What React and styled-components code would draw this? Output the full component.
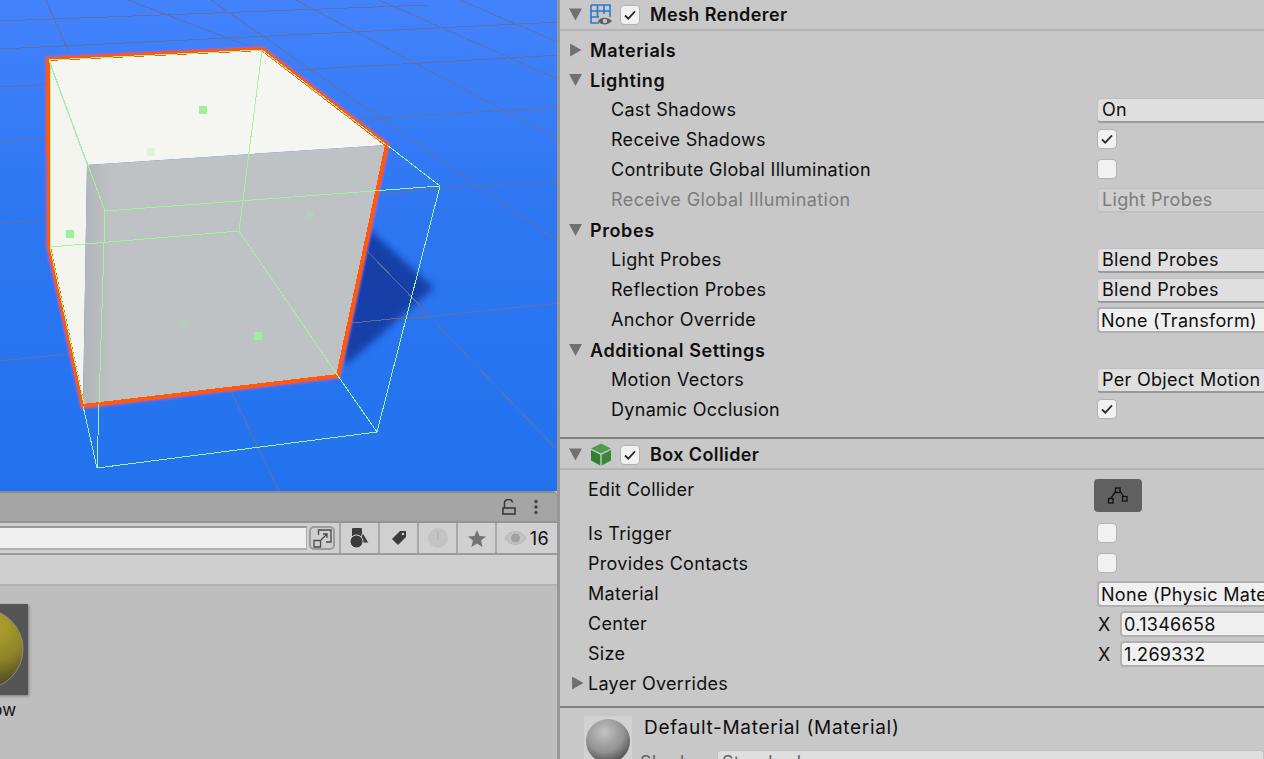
import React from "react";
import styled, { createGlobalStyle } from "styled-components";

const Global = createGlobalStyle`
  html, body { margin: 0; padding: 0; height: 100%; overflow: hidden; background: #c8c8c8; }
  #root { height: 100%; }
  * { box-sizing: border-box; }
`;

const Page = styled.div`
  width: 1264px;
  height: 759px;
  display: flex;
  overflow: hidden;
  font-family: Inter, "Liberation Sans", sans-serif;
  font-size: 18px;
  color: #0f0f0f;
`;

const LeftCol = styled.div`
  width: 557px;
  flex: none;
  display: flex;
  flex-direction: column;
  background: #bebebe;
  overflow: hidden;
`;
const Splitter = styled.div`
  width: 3px;
  flex: none;
  background: #989898;
`;
const SceneBox = styled.div`
  height: 491px;
  flex: none;
  svg { display: block; }
`;
const LockBar = styled.div`
  height: 32px;
  flex: none;
  background: #a5a5a5;
  border-top: 2px solid #8a8a8a;
  border-bottom: 2px solid #949494;
  border-top-right-radius: 5px;
  display: flex;
  align-items: center;
  justify-content: flex-end;
  gap: 17px;
  padding-right: 18px;
`;
const SearchBar = styled.div`
  height: 32px;
  flex: none;
  background: #d0d0d0;
  border-bottom: 2px solid #9a9a9a;
  display: flex;
  align-items: stretch;
`;
const SearchField = styled.div`
  width: 336px;
  flex: none;
  padding: 3px 1px 3px 0;
  display: flex;
  gap: 2px;
`;
const SearchInput = styled.div`
  flex: 1;
  background: #efefef;
  border-top: 2px solid #999;
  border-bottom: 2px solid #aeaeae;
  border-right: 1px solid #aeaeae;
`;
const SearchMode = styled.div`
  width: 26px;
  flex: none;
  border: 2px solid #9c9c9c;
  border-radius: 5px;
  display: flex;
  align-items: center;
  justify-content: center;
  background: #cfcfcf;
`;
const ToolBtn = styled.div`
  width: ${(p) => p.$w || 37}px;
  flex: none;
  margin-left: ${(p) => p.$gap ?? 2}px;
  display: flex;
  align-items: center;
  justify-content: center;
  gap: 4px;
  letter-spacing: 0.5px;
  box-shadow: -2px 0 0 #a8a8a8;
`;
const Breadcrumb = styled.div`
  height: 31px;
  flex: none;
  background: #cfcfcf;
  border-bottom: 2px solid #b2b2b2;
`;
const AssetArea = styled.div`
  flex: 1;
  padding-top: 18px;
`;
const Asset = styled.div`
  width: 92px;
  margin-left: -64px;
  text-align: center;
`;
const AssetThumb = styled.div`
  height: 91px;
  background: #555;
  box-shadow: 1px 1px 3px rgba(0, 0, 0, 0.35);
  overflow: hidden;
  svg { display: block; }
`;
const AssetName = styled.div`
  font-size: 17px;
  line-height: 20px;
  margin-top: 5px;
  margin-left: 16px;
  color: #111;
`;

const Inspector = styled.div`
  flex: 1;
  min-width: 0;
  background: #c8c8c8;
  overflow: hidden;
`;
const CompHeader = styled.div`
  height: 31px;
  padding-top: ${(p) => p.$shift || 0}px;
  display: flex;
  align-items: center;
  padding-left: 9px;
  border-bottom: 2px solid #b4b4b4;
  font-weight: 600;
  letter-spacing: 0.4px;
`;
const Section = styled.div`
  padding-bottom: ${(p) => p.$bottom || 0}px;
  border-bottom: 2px solid #7f7f7f;
`;
const Arrow = styled.span`
  width: 13px;
  height: 13px;
  flex: none;
  background: #707070;
  clip-path: ${(p) =>
    p.$open ? "polygon(0 4%, 100% 4%, 50% 96%)" : "polygon(8% 0, 96% 50%, 8% 100%)"};
`;
const HeaderIcon = styled.span`
  width: 22px;
  height: 22px;
  margin-left: 8px;
  flex: none;
  display: flex;
  align-items: center;
  svg { display: block; }
`;
const Check = styled.span`
  width: 20px;
  height: 20px;
  flex: none;
  border-radius: 4px;
  background: #f1f1f1;
  border: 1px solid #b2b2b2;
  display: flex;
  align-items: center;
  justify-content: center;
`;
const HeaderCheck = styled(Check)`
  margin-left: 8px;
  margin-right: 10px;
`;
const ValueCheck = styled(Check)`
  margin-bottom: 2px;
`;
const Row = styled.div`
  height: ${(p) => p.$h || 30}px;
  display: grid;
  grid-template-columns: 537px 400px;
  align-items: center;
  letter-spacing: 0.3px;
  white-space: nowrap;
`;
const Label = styled.div`
  padding-left: ${(p) => p.$indent}px;
  padding-bottom: 2px;
  color: ${(p) => (p.$muted ? "#7c7c7c" : "inherit")};
  letter-spacing: ${(p) => (p.$muted ? 0.42 : 0.3)}px;
`;
const TopLabel = styled(Label)`
  align-self: start;
  padding-top: 9px;
`;
const Foldout = styled.div`
  display: flex;
  align-items: center;
  gap: ${(p) => p.$gap ?? 8}px;
  padding-left: ${(p) => p.$left ?? 9}px;
  padding-top: ${(p) => p.$top || 0}px;
  padding-bottom: ${(p) => (p.$plain ? 2 : 0)}px;
  font-weight: ${(p) => (p.$plain ? 400 : 600)};
  letter-spacing: ${(p) => (p.$plain ? 0.3 : 0.6)}px;
`;
const Dropdown = styled.div`
  height: 25px;
  border-radius: 4px;
  background: #dfdfdf;
  border: 1px solid #c0c0c0;
  border-bottom: 2px solid #9a9a9a;
  display: flex;
  align-items: center;
  padding-left: 4px;
  ${(p) => p.$muted && "background:#cfcfcf;border-color:#c0c0c0;color:#7c7c7c;"}
`;
const ObjectField = styled.div`
  height: 26px;
  border-radius: 4px;
  background: #f0f0f0;
  border: 2px solid #b0b0b0;
  display: flex;
  align-items: center;
  padding-left: 2px;
`;
const Vector = styled.div`
  display: flex;
  align-items: center;
  padding-left: 1px;
`;
const AxisLabel = styled.span`
  width: 22px;
  flex: none;
`;
const NumberField = styled(ObjectField)`
  flex: 1;
`;
const EditButton = styled.div`
  width: 48px;
  height: 33px;
  margin-left: -3px;
  margin-top: 2px;
  border-radius: 4px;
  background: #606060;
  display: flex;
  align-items: center;
  justify-content: center;
`;
const MaterialHead = styled.div`
  padding: 8px 0 0 24px;
  display: flex;
  gap: 12px;
  white-space: nowrap;
`;
const MatThumb = styled.div`
  width: 48px;
  height: 48px;
  flex: none;
  background: #d2d2d2;
  svg { display: block; }
`;
const MatBody = styled.div`
  display: flex;
  flex-direction: column;
`;
const MatTitle = styled.div`
  height: 26px;
  margin-top: -2px;
  display: flex;
  align-items: center;
  font-size: 19px;
  letter-spacing: 0.7px;
`;
const ShaderRow = styled.div`
  display: flex;
  margin-top: 10px;
  margin-left: -4px;
  color: #666;
  letter-spacing: 0.3px;
`;
const ShaderLabel = styled.div`
  width: 77px;
  flex: none;
  padding-top: 2px;
`;
const ShaderSelect = styled(Dropdown)`
  width: 547px;
  color: #666;
`;

const Tick = () => (
  <svg width="14" height="12" viewBox="0 0 14 12">
    <path d="M2 6.5 L5.3 9.6 L12 2.4" fill="none" stroke="#2c2c2c" strokeWidth="1.8" />
  </svg>
);

const Scene = () => {
  const grid = [
    [0, 21, 428, 5], [0, 49, 560, 22], [0, 87, 560, 55], [0, 141, 560, 107],
    [0, 223, 560, 180], [0, 361, 560, 303], [46, 0, 70, 55], [128, 0, 290, 62],
    [211, 0, 560, 243], [296, 0, 560, 140], [379, 0, 560, 80], [460, 0, 560, 43],
    [368, 252, 560, 453], [228, 385, 279, 491],
  ];
  const wire = [
    "49,60 262,50 386,145", "387,145 440,186 377,432 97,468 83,406",
    "50,60 50,247 84,404", "49,60 105,211 440,186", "262,50 239,231 50,247",
    "239,231 338,376 377,432", "105,211 97,468",
  ];
  const handles = [[203, 110, 1], [70, 234, 1], [258, 336, 1], [151, 152, 0.25], [310, 215, 0.25], [184, 323, 0.25]];
  return (
    <svg width="557" height="491" viewBox="0 0 557 491">
      <defs>
        <linearGradient id="sky" x1="0" y1="0" x2="0" y2="1">
          <stop offset="0" stopColor="#4382fd" />
          <stop offset="0.4" stopColor="#2f77f3" />
          <stop offset="1" stopColor="#2272ee" />
        </linearGradient>
        <linearGradient id="front" gradientUnits="userSpaceOnUse" x1="87" y1="0" x2="112" y2="0">
          <stop offset="0" stopColor="#b4b7ba" />
          <stop offset="1" stopColor="#bfc2c5" />
        </linearGradient>
        <filter id="soft" x="-20%" y="-20%" width="140%" height="140%">
          <feGaussianBlur stdDeviation="3.5" />
        </filter>
        <filter id="glow" x="-10%" y="-10%" width="120%" height="120%">
          <feGaussianBlur stdDeviation="1.2" />
        </filter>
      </defs>
      <rect width="557" height="491" fill="url(#sky)" />
      {grid.map(([a, b, c, d]) => (
        <line key={`${a}-${b}`} x1={a} y1={b} x2={c} y2={d} stroke="#5f72a8" strokeWidth="1" shapeRendering="crispEdges" />
      ))}
      <polygon points="368,228 434,288 345,366 335,300" fill="#163fa8" filter="url(#soft)" />
      <line x1="368" y1="252" x2="430" y2="316" stroke="#5b6ca0" shapeRendering="crispEdges" />
      <line x1="352" y1="323" x2="430" y2="315" stroke="#5b6ca0" shapeRendering="crispEdges" />
      <polygon points="48,59 262,49 387,145 338,376 83,406 49,247" fill="none" stroke="#a65fd8" strokeWidth="6" filter="url(#glow)" />
      <polygon points="48,59 262,49 387,145 87,165" fill="#f5f6f2" />
      <polygon points="48,59 87,165 83,406 49,247" fill="#f4f4ee" />
      <polygon points="87,165 387,145 338,376 83,406" fill="url(#front)" />
      <polygon points="48,59 262,49 387,145 338,376 83,406 49,247" fill="none" stroke="#ff5a0c" strokeWidth="4" shapeRendering="crispEdges" />
      {wire.map((w) => (
        <polyline key={w} points={w} fill="none" stroke="#a0f49a" strokeWidth="1" shapeRendering="crispEdges" />
      ))}
      {handles.map(([x, y, o]) => (
        <rect key={x} x={x - 4} y={y - 4} width="8" height="8" fill="#9cf09a" opacity={o} />
      ))}
    </svg>
  );
};

const MeshIcon = () => (
  <svg width="22" height="22" viewBox="0 0 22 22">
    <path d="M1 1h19v12M1 1v18h8M7.500 1v12M14 1v9M1 7h19M1 13h8" fill="none" stroke="#2a78cc" strokeWidth="1.6" />
    <path d="M8 17c2.500-4.500 10-4.500 14 0c-4 4.500-11.500 4.500-14 0z" fill="#5f5f5f" />
    <circle cx="15" cy="17" r="2.200" fill="#c8c8c8" />
  </svg>
);
const CubeIcon = () => (
  <svg width="22" height="23" viewBox="0 0 22 23">
    <path d="M11 0.500 L21 5.500 L11 10.500 L1 5.500z" fill="#4f9c4f" />
    <path d="M1 7 L10.300 11.700 V22.500 L1 17.500z" fill="#2f8032" />
    <path d="M21 7 L11.700 11.700 V22.500 L21 17.500z" fill="#38883a" />
  </svg>
);

const Prop = ({ indent, label, children, muted }) => (
  <Row>
    <Label $indent={indent} $muted={muted}>{label}</Label>
    <div>{children}</div>
  </Row>
);

export default function App() {
  return (
    <Page>
      <Global />
      <LeftCol>
        <SceneBox><Scene /></SceneBox>
        <LockBar>
          <svg width="14" height="16" viewBox="0 0 14 16">
            <path d="M2.500 9V4a4 3.300 0 0 1 8 -0.500" fill="none" stroke="#3a3a3a" strokeWidth="1.6" />
            <rect x="1" y="9" width="12" height="6" fill="none" stroke="#3a3a3a" strokeWidth="1.6" />
          </svg>
          <svg width="6" height="16" viewBox="0 0 6 16">
            <circle cx="3" cy="2.500" r="1.700" fill="#444" />
            <circle cx="3" cy="8" r="1.700" fill="#444" />
            <circle cx="3" cy="13.500" r="1.700" fill="#444" />
          </svg>
        </LockBar>
        <SearchBar>
          <SearchField>
            <SearchInput />
            <SearchMode>
              <svg width="19" height="19" viewBox="0 0 19 19">
                <path d="M5.500 6V1h12.500v12H13M1 11.500h6.500v6.500H1zM8 11l6-6M10 5h4v4" fill="none" stroke="#4a4a4a" strokeWidth="1.300" />
              </svg>
            </SearchMode>
          </SearchField>
          <ToolBtn $gap={5}>
            <svg width="19" height="20" viewBox="0 0 19 20">
              <rect x="2" y="0" width="10" height="9.500" rx="1" fill="#3c3c3c" />
              <path d="M12.800 4.500 L19 15 H9z" fill="#3c3c3c" stroke="#d0d0d0" strokeWidth="1" />
              <circle cx="6.500" cy="13.500" r="6.500" fill="#3c3c3c" stroke="#d0d0d0" strokeWidth="1" />
            </svg>
          </ToolBtn>
          <ToolBtn>
            <svg width="16" height="16" viewBox="0 0 16 16">
              <path d="M9 1 H15 V7 L7 15 L1 9z" fill="#3c3c3c" />
              <circle cx="12" cy="4" r="1.200" fill="#d0d0d0" />
            </svg>
          </ToolBtn>
          <ToolBtn>
            <svg width="20" height="20" viewBox="0 0 20 20">
              <circle cx="10" cy="10" r="10" fill="#c3c3c3" />
              <path d="M10 3v9" stroke="#b4b4b4" strokeWidth="1.500" />
            </svg>
          </ToolBtn>
          <ToolBtn>
            <svg width="18" height="17" viewBox="0 0 18 17">
              <path d="M9 0 L11.600 6 L18 6.500 L13.100 10.600 L14.600 17 L9 13.600 L3.400 17 L4.900 10.600 L0 6.500 L6.400 6z" fill="#737373" />
            </svg>
          </ToolBtn>
          <ToolBtn $w={60}>
            <svg width="21" height="14" viewBox="0 0 21 14">
              <path d="M0.500 7C4-1.500 17-1.500 20.500 7C17 15.500 4 15.500 0.500 7z" fill="#c2c2c2" stroke="#b4b4b4" />
              <circle cx="10.500" cy="7" r="4.500" fill="#a2a2a2" />
            </svg>
            <span>16</span>
          </ToolBtn>
        </SearchBar>
        <Breadcrumb />
        <AssetArea>
          <Asset>
            <AssetThumb>
              <svg width="92" height="91" viewBox="0 0 92 91">
                <defs>
                  <radialGradient id="yellow" cx="0.62" cy="0.22" r="0.85">
                    <stop offset="0" stopColor="#b3a52d" />
                    <stop offset="0.5" stopColor="#8f8428" />
                    <stop offset="1" stopColor="#37341f" />
                  </radialGradient>
                </defs>
                <circle cx="47" cy="45" r="40" fill="url(#yellow)" stroke="#8a8a80" strokeWidth="1" />
              </svg>
            </AssetThumb>
            <AssetName>Yellow</AssetName>
          </Asset>
        </AssetArea>
      </LeftCol>
      <Splitter />
      <Inspector>
        <Section $bottom={12}>
          <CompHeader>
            <Arrow $open />
            <HeaderIcon><MeshIcon /></HeaderIcon>
            <HeaderCheck><Tick /></HeaderCheck>
            Mesh Renderer
          </CompHeader>
          <Row $h={34}><Foldout $top={4}><Arrow />Materials</Foldout></Row>
          <Row><Foldout><Arrow $open />Lighting</Foldout></Row>
          <Prop indent={51} label="Cast Shadows"><Dropdown>On</Dropdown></Prop>
          <Prop indent={51} label="Receive Shadows"><ValueCheck><Tick /></ValueCheck></Prop>
          <Prop indent={51} label="Contribute Global Illumination"><ValueCheck /></Prop>
          <Prop indent={51} label="Receive Global Illumination" muted><Dropdown $muted>Light Probes</Dropdown></Prop>
          <Row><Foldout><Arrow $open />Probes</Foldout></Row>
          <Prop indent={51} label="Light Probes"><Dropdown>Blend Probes</Dropdown></Prop>
          <Prop indent={51} label="Reflection Probes"><Dropdown>Blend Probes</Dropdown></Prop>
          <Prop indent={51} label="Anchor Override"><ObjectField>None (Transform)</ObjectField></Prop>
          <Row><Foldout><Arrow $open />Additional Settings</Foldout></Row>
          <Prop indent={51} label="Motion Vectors"><Dropdown>Per Object Motion</Dropdown></Prop>
          <Prop indent={51} label="Dynamic Occlusion"><ValueCheck><Tick /></ValueCheck></Prop>
        </Section>
        <Section $bottom={7}>
          <CompHeader $shift={2}>
            <Arrow $open />
            <HeaderIcon><CubeIcon /></HeaderIcon>
            <HeaderCheck><Tick /></HeaderCheck>
            Box Collider
          </CompHeader>
          <Row $h={49}>
            <TopLabel $indent={28}>Edit Collider</TopLabel>
            <EditButton>
              <svg width="22" height="18" viewBox="0 0 22 18">
                <path d="M4 11 L9 4 M13 4 L17 10" stroke="#111" strokeWidth="1.300" fill="none" />
                <rect x="1.500" y="11.500" width="4.500" height="4.500" fill="none" stroke="#111" strokeWidth="1.300" />
                <rect x="8.500" y="1" width="4.500" height="4.500" fill="none" stroke="#111" strokeWidth="1.300" />
                <rect x="15.500" y="9.500" width="4.500" height="4.500" fill="none" stroke="#111" strokeWidth="1.300" />
              </svg>
            </EditButton>
          </Row>
          <Prop indent={28} label="Is Trigger"><ValueCheck /></Prop>
          <Prop indent={28} label="Provides Contacts"><ValueCheck /></Prop>
          <Prop indent={28} label="Material"><ObjectField>None (Physic Material)</ObjectField></Prop>
          <Prop indent={28} label="Center">
            <Vector><AxisLabel>X</AxisLabel><NumberField>0.1346658</NumberField></Vector>
          </Prop>
          <Prop indent={28} label="Size">
            <Vector><AxisLabel>X</AxisLabel><NumberField>1.269332</NumberField></Vector>
          </Prop>
          <Row><Foldout $plain $left={11} $gap={4}><Arrow />Layer Overrides</Foldout></Row>
        </Section>
        <MaterialHead>
          <MatThumb>
            <svg width="48" height="48" viewBox="0 0 48 48">
              <defs>
                <radialGradient id="grey" cx="0.42" cy="0.3" r="0.75">
                  <stop offset="0" stopColor="#c2c2c2" />
                  <stop offset="0.6" stopColor="#929292" />
                  <stop offset="1" stopColor="#484848" />
                </radialGradient>
              </defs>
              <circle cx="24" cy="25" r="22" fill="url(#grey)" />
            </svg>
          </MatThumb>
          <MatBody>
            <MatTitle>Default-Material (Material)</MatTitle>
            <ShaderRow>
              <ShaderLabel>Shader</ShaderLabel>
              <ShaderSelect>Standard</ShaderSelect>
            </ShaderRow>
          </MatBody>
        </MaterialHead>
      </Inspector>
    </Page>
  );
}
